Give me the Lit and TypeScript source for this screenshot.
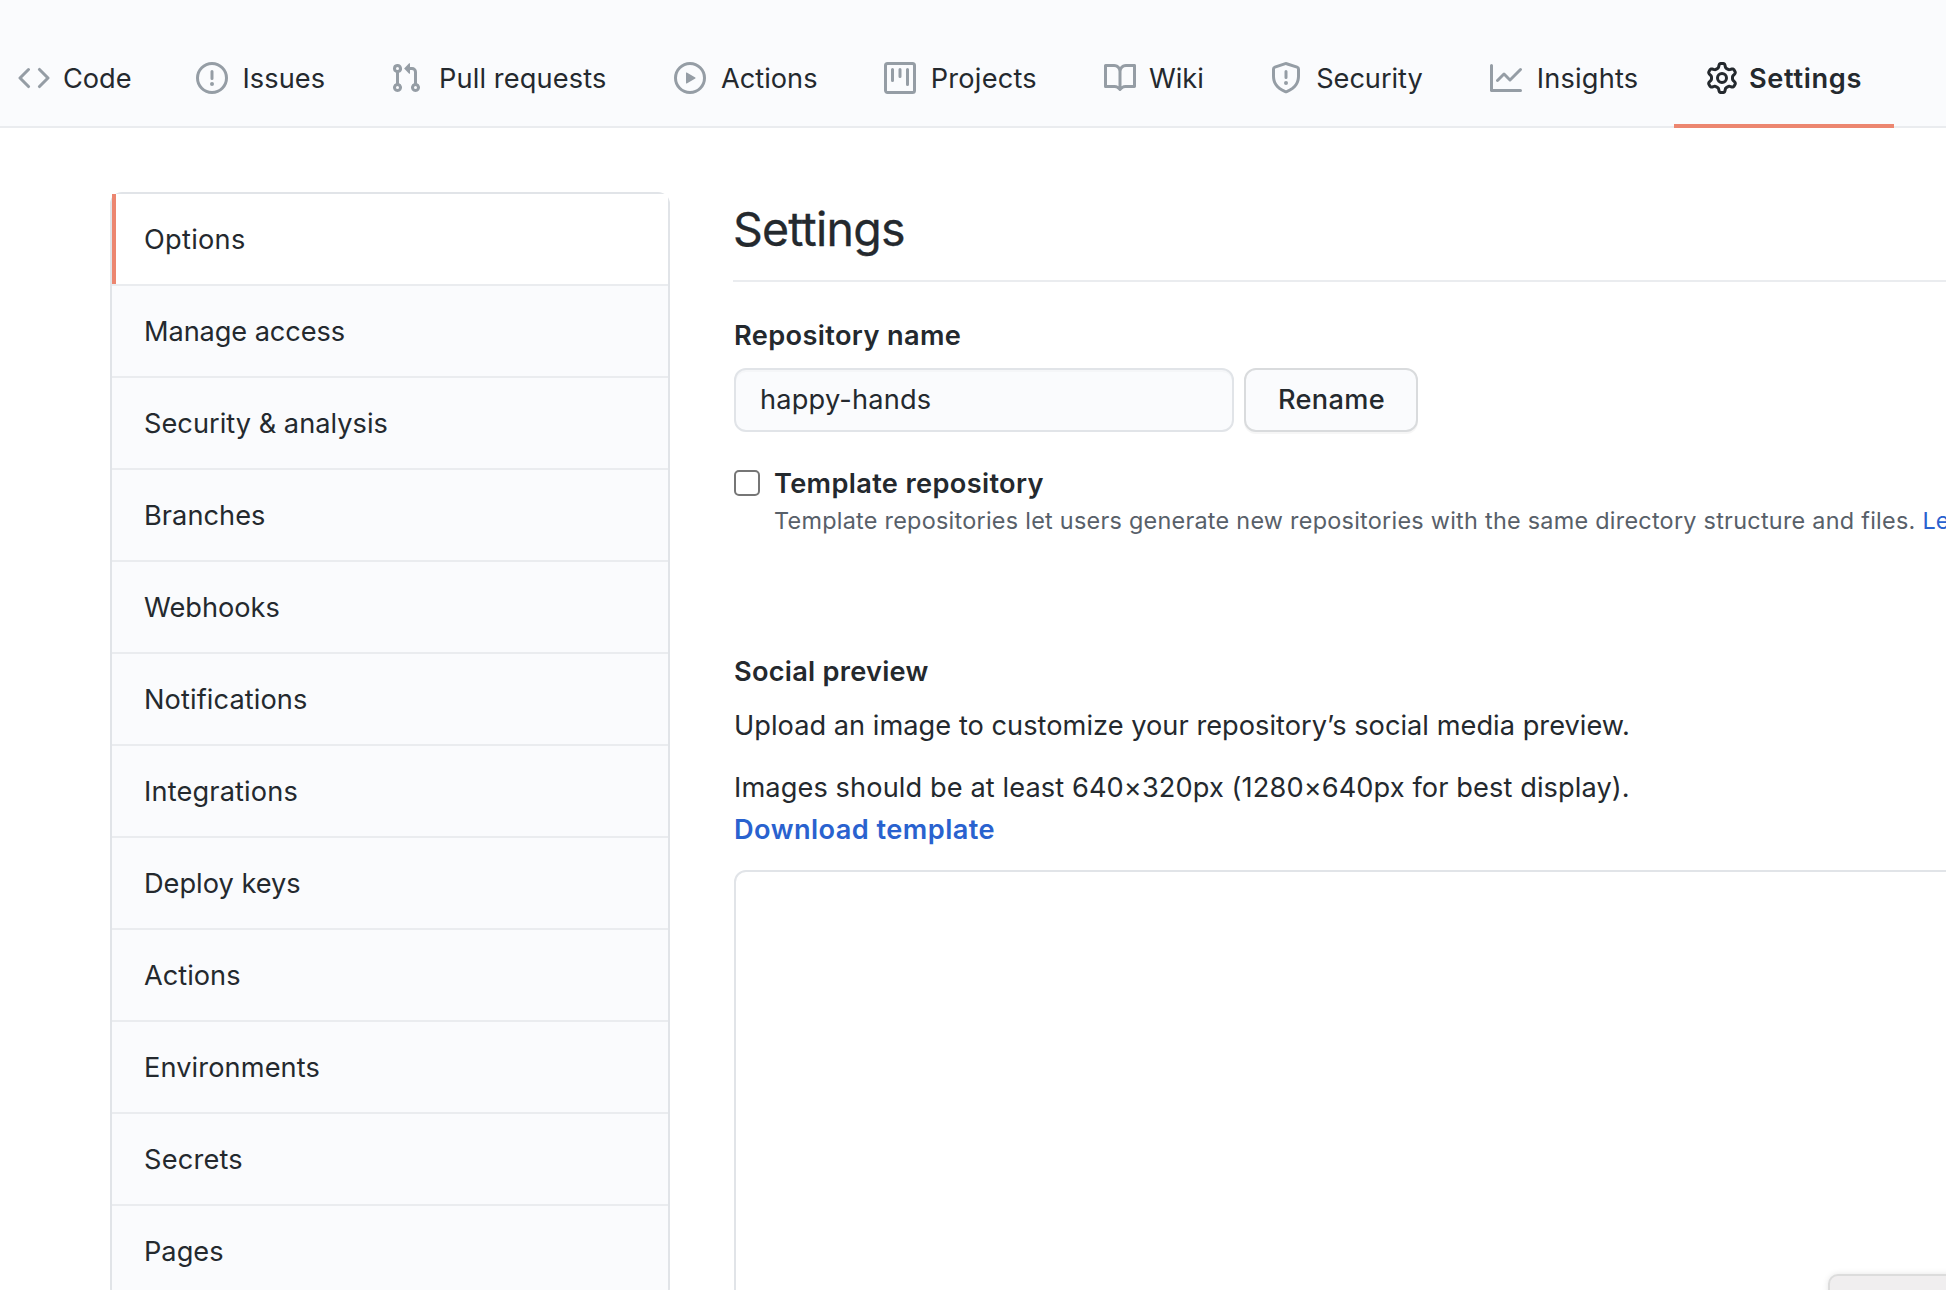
import { LitElement, html, css, svg } from "lit";
import { customElement, property, state } from "lit/decorators.js";
import { classMap } from "lit/directives/class-map.js";
import { styleMap } from "lit/directives/style-map.js";

const ICONS: Record<string, string> = {
  code: "M4.72 3.22a.75.75 0 011.06 1.06L2.06 8l3.72 3.72a.75.75 0 11-1.06 1.06L.47 8.53a.75.75 0 010-1.06l4.25-4.25zm6.56 0a.75.75 0 10-1.06 1.06L13.94 8l-3.72 3.72a.75.75 0 101.06 1.06l4.25-4.25a.75.75 0 000-1.06l-4.25-4.25z",
  issue: "M8 1.5a6.5 6.5 0 100 13 6.5 6.5 0 000-13zM0 8a8 8 0 1116 0A8 8 0 010 8zm9 3a1 1 0 11-2 0 1 1 0 012 0zm-.25-6.25a.75.75 0 00-1.5 0v3.5a.75.75 0 001.5 0v-3.5z",
  pull: "M7.177 3.073L9.573.677A.25.25 0 0110 .854v4.792a.25.25 0 01-.427.177L7.177 3.427a.25.25 0 010-.354zM3.75 2.5a.75.75 0 100 1.5.75.75 0 000-1.5zm-2.25.75a2.25 2.25 0 113 2.122v5.256a2.251 2.251 0 11-1.5 0V5.372A2.25 2.25 0 011.5 3.25zM11 2.5h-1V4h1a1 1 0 011 1v5.628a2.251 2.251 0 101.5 0V5A2.5 2.5 0 0011 2.5zm1 10.25a.75.75 0 111.5 0 .75.75 0 01-1.5 0zM3.75 12a.75.75 0 100 1.5.75.75 0 000-1.5z",
  play: "M1.5 8a6.5 6.5 0 1113 0 6.5 6.5 0 01-13 0zM8 0a8 8 0 100 16A8 8 0 008 0zM6.379 5.227A.25.25 0 006 5.442v5.117a.25.25 0 00.379.214l4.264-2.559a.25.25 0 000-.428L6.379 5.227z",
  project: "M1.75 0A1.75 1.75 0 000 1.75v12.5C0 15.216.784 16 1.75 16h12.5A1.75 1.75 0 0016 14.25V1.75A1.75 1.75 0 0014.25 0H1.75zM1.5 1.75a.25.25 0 01.25-.25h12.5a.25.25 0 01.25.25v12.5a.25.25 0 01-.25.25H1.75a.25.25 0 01-.25-.25V1.75zM11.75 3a.75.75 0 00-.75.75v7.5a.75.75 0 001.5 0v-7.5a.75.75 0 00-.75-.75zm-8.25.75a.75.75 0 011.5 0v5.5a.75.75 0 01-1.5 0v-5.5zM8 3a.75.75 0 00-.75.75v3.5a.75.75 0 001.5 0v-3.5A.75.75 0 008 3z",
  book: "M0 1.75A.75.75 0 01.75 1h4.253c1.227 0 2.317.59 3 1.501A3.744 3.744 0 0111.006 1h4.245a.75.75 0 01.75.75v10.5a.75.75 0 01-.75.75h-4.507a2.25 2.25 0 00-1.591.659l-.622.621a.75.75 0 01-1.06 0l-.622-.621A2.25 2.25 0 005.258 13H.75a.75.75 0 01-.75-.75V1.75zm8.755 3a2.25 2.25 0 012.25-2.25H14.5v9h-3.757c-.71 0-1.4.201-1.992.572l.004-7.322zm-1.504 7.324l.004-5.073-.002-2.253A2.25 2.25 0 005.003 2.5H1.5v9h3.757a3.75 3.75 0 011.994.574z",
  shield: "M7.467.133a1.75 1.75 0 011.066 0l5.25 1.68A1.75 1.75 0 0115 3.48V7c0 1.566-.32 3.182-1.303 4.682-.983 1.498-2.585 2.813-5.032 3.855a1.7 1.7 0 01-1.33 0c-2.447-1.042-4.049-2.357-5.032-3.855C1.32 10.182 1 8.566 1 7V3.48a1.75 1.75 0 011.217-1.667l5.25-1.68zm.61 1.429a.25.25 0 00-.153 0l-5.25 1.68a.25.25 0 00-.174.238V7c0 1.358.275 2.666 1.057 3.86.784 1.194 2.121 2.34 4.366 3.297a.2.2 0 00.154 0c2.245-.956 3.582-2.104 4.366-3.298C13.225 9.666 13.5 8.36 13.5 7V3.48a.25.25 0 00-.174-.237l-5.25-1.68zM9 10.5a1 1 0 11-2 0 1 1 0 012 0zm-.25-5.75a.75.75 0 10-1.5 0v3a.75.75 0 001.5 0v-3z",
  graph: "M1.5 1.75a.75.75 0 00-1.5 0v12.5c0 .414.336.75.75.75h14.5a.75.75 0 000-1.5H1.5V1.75zm14.28 2.53a.75.75 0 00-1.06-1.06L10 7.94 7.53 5.47a.75.75 0 00-1.06 0L3.22 8.72a.75.75 0 001.06 1.06L7 7.06l2.47 2.47a.75.75 0 001.06 0l5.25-5.25z",
  gear: "M7.429 1.525a6.593 6.593 0 011.142 0c.036.003.108.036.137.146l.289 1.105c.147.56.55.967.997 1.189.174.086.341.183.501.29.417.278.97.423 1.53.27l1.102-.303c.11-.03.175.016.195.046.219.31.41.641.573.989.014.031.022.11-.059.19l-.815.806c-.411.406-.562.957-.53 1.456a4.588 4.588 0 010 .582c-.032.499.119 1.05.53 1.456l.815.806c.08.08.073.159.059.19a6.494 6.494 0 01-.573.99c-.02.029-.086.074-.195.045l-1.103-.303c-.559-.153-1.112-.008-1.529.27-.16.107-.327.204-.5.29-.449.222-.851.628-.998 1.189l-.289 1.105c-.029.11-.101.143-.137.146a6.613 6.613 0 01-1.142 0c-.036-.003-.108-.037-.137-.146l-.289-1.105c-.147-.56-.55-.967-.997-1.189a4.502 4.502 0 01-.501-.29c-.417-.278-.97-.423-1.53-.27l-1.102.303c-.11.03-.175-.016-.195-.046a6.492 6.492 0 01-.573-.989c-.014-.031-.022-.11.059-.19l.815-.806c.411-.406.562-.957.53-1.456a4.587 4.587 0 010-.582c.032-.499-.119-1.05-.53-1.456l-.815-.806c-.08-.08-.073-.159-.059-.19a6.44 6.44 0 01.573-.99c.02-.029.086-.075.195-.045l1.103.303c.559.153 1.112.008 1.529-.27.16-.107.327-.204.5-.29.449-.222.851-.628.998-1.189l.289-1.105c.029-.11.101-.143.137-.146zM8 0c-.236 0-.47.01-.701.03-.743.065-1.29.615-1.458 1.261l-.29 1.106c-.017.066-.078.158-.211.224a5.994 5.994 0 00-.668.386c-.123.082-.233.09-.3.071L3.27 2.776c-.644-.177-1.392.02-1.82.63a7.977 7.977 0 00-.704 1.217c-.315.675-.111 1.422.363 1.891l.815.806c.05.048.098.147.088.294a6.084 6.084 0 000 .772c.01.147-.038.246-.088.294l-.815.806c-.474.469-.678 1.216-.363 1.891.2.428.436.835.704 1.218.428.609 1.176.806 1.82.63l1.103-.303c.066-.019.176-.011.299.071.213.143.436.272.668.386.133.066.194.158.212.224l.289 1.106c.169.646.715 1.196 1.458 1.26a8.094 8.094 0 001.402 0c.743-.064 1.29-.614 1.458-1.26l.29-1.106c.017-.066.078-.158.211-.224a5.98 5.98 0 00.668-.386c.123-.082.233-.09.3-.071l1.102.302c.644.177 1.392-.02 1.82-.63.268-.382.505-.789.704-1.217.315-.675.111-1.422-.364-1.891l-.814-.806c-.05-.048-.098-.147-.088-.294a6.1 6.1 0 000-.772c-.01-.147.039-.246.088-.294l.814-.806c.475-.469.679-1.216.364-1.891a7.992 7.992 0 00-.704-1.218c-.428-.609-1.176-.806-1.82-.63l-1.103.303c-.066.019-.176.011-.299-.071a5.991 5.991 0 00-.668-.386c-.133-.066-.194-.158-.212-.224L10.16 1.29C9.99.645 9.444.095 8.701.031A8.094 8.094 0 008 0zm1.5 8a1.5 1.5 0 11-3 0 1.5 1.5 0 013 0zM11 8a3 3 0 11-6 0 3 3 0 016 0z",
};

interface Tab { label: string; icon: string; width: number; gap: number; tracking: number; }

const TABS: Tab[] = [
  { label: "Code", icon: "code", width: 178, gap: 13, tracking: -0.05 },
  { label: "Issues", icon: "issue", width: 194, gap: 14.5, tracking: 0.05 },
  { label: "Pull requests", icon: "pull", width: 284, gap: 17, tracking: 0.12 },
  { label: "Actions", icon: "play", width: 210, gap: 15, tracking: 0 },
  { label: "Projects", icon: "project", width: 220, gap: 14.8, tracking: 0.2 },
  { label: "Wiki", icon: "book", width: 166, gap: 13, tracking: 0 },
  { label: "Security", icon: "shield", width: 220, gap: 14.2, tracking: -0.05 },
  { label: "Insights", icon: "graph", width: 216, gap: 14.7, tracking: 0.2 },
  { label: "Settings", icon: "gear", width: 220, gap: 11, tracking: 0.65 },
];

const MENU: [string, number][] = [
  ["Options", 0.28], ["Manage access", -0.1], ["Security & analysis", 0.02], ["Branches", 0.03],
  ["Webhooks", 0], ["Notifications", 0.1], ["Integrations", 0.15], ["Deploy keys", 0],
  ["Actions", 0], ["Environments", 0.1], ["Secrets", 0.2], ["Pages", 0],
];

@customElement("repo-nav")
class RepoNav extends LitElement {
  @property() current = "";

  static styles = css`
    :host { display: block; }
    .bar {
      display: flex; box-sizing: border-box; height: 128px;
      padding: 28px 0 0; background: #fafbfd; border-bottom: 2px solid #eaecef;
    }
    .tabs { display: flex; height: 100px; margin-left: -14px; }
    .tab {
      box-sizing: border-box; flex: none; display: flex; align-items: center;
      padding-left: 32px; font-size: 27.2px; line-height: 42px; color: #24292e;
      white-space: nowrap; text-decoration: none;
    }
    .text { padding-top: 2px; }
    .icon { flex: none; width: 32px; height: 32px; fill: #959da5; }
    .selected { font-weight: 600; box-shadow: inset 0 -4px #ec8670; }
    .selected .icon { fill: #24292e; }
  `;

  render() {
    return html`<nav class="bar"><div class="tabs">
      ${TABS.map((t) => html`<a class=${classMap({ tab: true, selected: t.label === this.current })}
        style=${styleMap({ width: `${t.width}px`, gap: `${t.gap}px`, letterSpacing: `${t.tracking}px` })}
        ><svg class="icon" viewBox="0 0 16 16">${svg`<path fill-rule="evenodd" d=${ICONS[t.icon]}></path>`}</svg><span class="text">${t.label}</span></a>`)}
    </div></nav>`;
  }
}

@customElement("settings-menu")
class SettingsMenu extends LitElement {
  static styles = css`
    :host { display: block; }
    .menu { border: 2px solid #e1e4e8; border-radius: 12px; }
    .item {
      box-sizing: border-box; height: 92px; padding: 25px 32px 0; background: #fafbfd;
      border-bottom: 2px solid #eaecef; font-size: 27.2px; line-height: 42px; color: #24292e;
    }
    .active { background: #fff; box-shadow: inset 4px 0 #ec8670; }
  `;

  render() {
    return html`<nav class="menu">${MENU.map(([label, tracking], i) => html`<div
      class=${classMap({ item: true, active: i === 0 })}
      style=${styleMap({ letterSpacing: `${tracking}px` })}>${label}</div>`)}</nav>`;
  }
}

@customElement("app-root")
class AppRoot extends LitElement {
  @state() private repoName = "happy-hands";

  static styles = css`
    :host {
      display: block; position: relative; height: 100vh; overflow: hidden; background: #fff;
      font-family: Inter, "Liberation Sans", sans-serif; font-size: 27.2px; line-height: 42px; color: #24292e;
    }
    .page { display: flex; align-items: flex-start; gap: 64px; padding: 64px 0 0 110px; }
    .side { flex: none; width: 560px; }
    .main { flex: none; width: 1500px; padding-top: 7px; white-space: nowrap; }
    h1 {
      margin: 0 0 0 -1px; padding-bottom: 21px; border-bottom: 2px solid #eaecef;
      font-size: 46.5px; line-height: 60px; font-weight: 400; letter-spacing: -0.8px;
      -webkit-text-stroke: 0.3px #24292e;
    }
    .label { margin-top: 33px; font-weight: 600; letter-spacing: 0.36px; }
    .rename { display: flex; gap: 10px; margin-top: 11px; height: 64px; }
    .field, .button { box-sizing: border-box; border-radius: 12px; font: inherit; color: inherit; }
    .field {
      width: 500px; padding: 0 24px; border: 2px solid #e1e4e8; background: #fafbfd;
      letter-spacing: 0.2px; box-shadow: inset 0 2px 0 rgba(225, 228, 232, 0.2); outline: none;
    }
    .button {
      width: 174px; padding: 0 0 0 1px; border: 2px solid #d9dbdd; background: #fafbfd;
      font-weight: 500; letter-spacing: 0.35px; box-shadow: 0 2px 0 rgba(27, 31, 35, 0.04);
    }
    .template { display: flex; gap: 14px; margin-top: 32px; }
    .check {
      appearance: none; flex: none; box-sizing: border-box; width: 26px; height: 26px; margin: 6px 0 0;
      border: 2px solid #767676; border-radius: 5px; background: #fff;
    }
    .template-name { line-height: 40px; font-weight: 600; letter-spacing: 0.35px; }
    .note { font-size: 23.4px; line-height: 34px; letter-spacing: 0.263px; color: #586069; }
    .link { color: #2962cf; }
    .subhead { margin-top: 113px; font-weight: 600; letter-spacing: 0.25px; }
    .upload { margin-top: 12px; letter-spacing: 0.03px; }
    .sizes { margin-top: 20px; letter-spacing: 0.1px; }
    .download { font-weight: 600; letter-spacing: 0.44px; }
    .preview { box-sizing: border-box; height: 640px; margin-top: 19px; border: 2px solid #e1e4e8; border-radius: 12px; }
    .status {
      position: absolute; right: -20px; bottom: -20px; box-sizing: border-box; width: 138px; height: 36px;
      border: 2px solid #dcdcdc; border-radius: 10px; background: #f0eeef; box-shadow: 0 0 6px rgba(0, 0, 0, 0.1);
    }
  `;

  render() {
    return html`
      <repo-nav current="Settings"></repo-nav>
      <div class="page">
        <settings-menu class="side"></settings-menu>
        <main class="main">
          <h1>Settings</h1>
          <div class="label">Repository name</div>
          <div class="rename">
            <input class="field" type="text" spellcheck="false" .value=${this.repoName}
              @input=${(e: Event) => (this.repoName = (e.target as HTMLInputElement).value)} />
            <button class="button">Rename</button>
          </div>
          <div class="template">
            <input class="check" type="checkbox" />
            <div>
              <div class="template-name">Template repository</div>
              <div class="note">Template repositories let users generate new repositories with the same directory structure and files. <a class="link">Learn more.</a></div>
            </div>
          </div>
          <div class="subhead">Social preview</div>
          <div class="upload">Upload an image to customize your repository’s social media preview.</div>
          <div class="sizes">Images should be at least 640×320px (1280×640px for best display).</div>
          <div class="download link">Download template</div>
          <div class="preview"></div>
        </main>
      </div>
      <div class="status"></div>
    `;
  }
}
